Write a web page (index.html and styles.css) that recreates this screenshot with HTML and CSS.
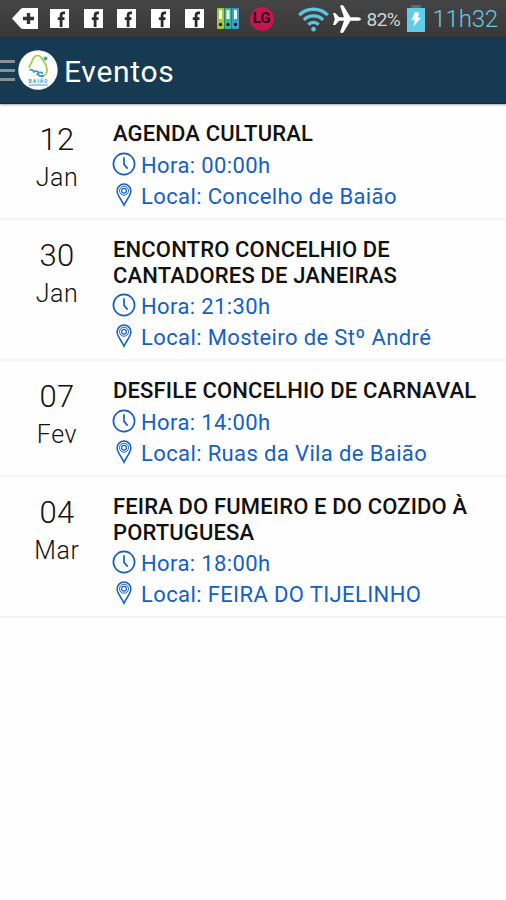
FILE: index.html
```html
<!DOCTYPE html>
<html lang="pt">

<head>
    <meta charset="UTF-8">
    <meta name="viewport" content="width=device-width, initial-scale=1.0">
    <title>Eventos</title>
    <link rel="stylesheet" href="styles.css">
</head>

<body>
    <!-- shared icons -->
    <svg class="sprite" width="0" height="0">
        <symbol id="icon-facebook" viewBox="0 0 19 19">
            <rect width="19" height="19" fill="#fff"/>
            <path d="M15 3.800h-1.500c-1.700 0-2.400.8-2.400 2.400V18M7.800 9.600h6.700" fill="none" stroke="#2b2b2b" stroke-width="2.800"/>
        </symbol>
        <symbol id="icon-clock" viewBox="0 0 24 24">
            <circle cx="12" cy="12" r="10.600" fill="none" stroke="currentColor" stroke-width="1.700"/>
            <path d="M12 5.200v7.200l3.600 4.200" fill="none" stroke="currentColor" stroke-width="1.700"/>
        </symbol>
        <symbol id="icon-pin" viewBox="0 0 24 24">
            <path d="M12 22.300C10 17.300 5.100 12.400 5.100 8a6.900 6.900 0 0 1 13.800 0c0 4.400-4.900 9.300-6.900 14.300z" fill="none" stroke="currentColor" stroke-width="1.500"/>
            <circle cx="12" cy="7.700" r="4.500" fill="none" stroke="currentColor" stroke-width="1"/>
            <circle cx="12" cy="7.700" r="2.400" fill="none" stroke="currentColor" stroke-width="1.200"/>
        </symbol>
    </svg>

    <div class="status-bar">
        <div class="notifications">
            <svg class="tag" width="27" height="21" viewBox="0 0 27 21">
                <path d="M0 10.500L8.500 1.200Q9.600 0 11.200 0H26v21H11.200Q9.600 21 8.500 19.800z" fill="#fff"/>
                <path d="M16.500 5v11M11 10.500h11" stroke="#333" stroke-width="3.400"/>
            </svg>
            <svg width="19" height="19"><use href="#icon-facebook"/></svg>
            <svg width="19" height="19"><use href="#icon-facebook"/></svg>
            <svg width="19" height="19"><use href="#icon-facebook"/></svg>
            <svg width="19" height="19"><use href="#icon-facebook"/></svg>
            <svg width="19" height="19"><use href="#icon-facebook"/></svg>
            <svg width="22" height="21" viewBox="0 0 22 21">
                <rect width="7" height="21" rx="1" fill="#a5c938"/>
                <rect x="7.500" width="7" height="21" rx="1" fill="#36b89a"/>
                <rect x="15" width="7" height="21" rx="1" fill="#3d9bd2"/>
                <path d="M2 2h3v9H2zM9.500 2h3v9h-3zM17 2h3v9h-3z" fill="#f2fbf0"/>
                <g fill="#222">
                    <circle cx="3.500" cy="16.500" r="1.700"/>
                    <circle cx="11" cy="16.500" r="1.700"/>
                    <circle cx="18.500" cy="16.500" r="1.700"/>
                </g>
            </svg>
            <span class="lg">LG</span>
        </div>
        <svg class="wifi" width="31" height="26" viewBox="0 0 30 25">
            <g fill="none" stroke="#5cc6e2" stroke-width="3.200">
                <path d="M1.200 8.800a19.500 19.500 0 0 1 27.600 0"/>
                <path d="M5.700 13.400a13.200 13.200 0 0 1 18.600 0"/>
                <path d="M10 17.900a7 7 0 0 1 10 0"/>
            </g>
            <circle cx="15" cy="22.300" r="2.200" fill="#5cc6e2"/>
        </svg>
        <svg class="plane" width="28" height="28" viewBox="0 0 28 28">
            <path d="M0 8h2.200l4 4.200h4.800L7.300 1.500Q7.100 0 8.600 0q1.500 0 2.200 1.300l6.700 10.900h8Q28 12.600 28 14t-2.500 1.800h-8l-6.700 10.900Q10.100 28 8.600 28q-1.500 0-1.300-1.500L11 15.800H6.200L2.200 20H0l1.800-6z" fill="#fff"/>
        </svg>
        <span class="percent">82%</span>
        <svg class="battery" width="18" height="27" viewBox="0 0 18 27">
            <path d="M4 0h10v4H4z" fill="#666"/>
            <rect y="3" width="18" height="24" fill="#5fcde9"/>
            <path d="M7.500 7.500h5l-1.800 5.300H14L6.200 22l1.900-6.800H4.500z" fill="#fff"/>
        </svg>
        <span class="time">11h32</span>
    </div>

    <div class="header">
        <div class="menu">
            <span></span>
            <span></span>
            <span></span>
        </div>
        <svg class="logo" width="40" height="40" viewBox="0 0 40 40">
            <circle cx="20" cy="20" r="19.700" fill="#fff"/>
            <path d="M11 18C11.500 15 13.500 13.500 14.500 10c1-3 3-4.500 5.500-4.500 3 0 3.500 2.500 5.500 5.500s4 7 3.500 10.500c-.3 2-1.500 3.500-3.500 4" fill="none" stroke="#a9cc3a" stroke-width="1.700"/>
            <path d="M11.500 20c2-.8 3.500-.3 4.500 1.800 2-1.300 3.500-.8 4.500 1 1.500-.8 3-.6 4.500.7M18.500 23.500l3.500 2.500h4" fill="none" stroke="#2f9bd8" stroke-width="1.800"/>
            <circle cx="27.500" cy="8.500" r="2" fill="#3a9fe0"/>
            <text x="20.500" y="32.800" class="logo-name">BAIÃO</text>
            <path d="M11 35h19" stroke="#5fb3df" stroke-width="1.200"/>
        </svg>
        <h1>Eventos</h1>
    </div>

    <div class="events">
        <div class="event">
            <div class="date">
                <div class="day">12</div>
                <div class="month">Jan</div>
            </div>
            <div class="info">
                <h2>AGENDA CULTURAL</h2>
                <p><svg width="24" height="24"><use href="#icon-clock"/></svg><span>Hora: 00:00h</span></p>
                <p><svg width="24" height="24"><use href="#icon-pin"/></svg><span>Local: Concelho de Baião</span></p>
            </div>
        </div>
        <div class="event">
            <div class="date">
                <div class="day">30</div>
                <div class="month">Jan</div>
            </div>
            <div class="info">
                <h2>ENCONTRO CONCELHIO DE<br>CANTADORES DE JANEIRAS</h2>
                <p><svg width="24" height="24"><use href="#icon-clock"/></svg><span>Hora: 21:30h</span></p>
                <p><svg width="24" height="24"><use href="#icon-pin"/></svg><span>Local: Mosteiro de Stº André</span></p>
            </div>
        </div>
        <div class="event">
            <div class="date">
                <div class="day">07</div>
                <div class="month">Fev</div>
            </div>
            <div class="info">
                <h2>DESFILE CONCELHIO DE CARNAVAL</h2>
                <p><svg width="24" height="24"><use href="#icon-clock"/></svg><span>Hora: 14:00h</span></p>
                <p><svg width="24" height="24"><use href="#icon-pin"/></svg><span>Local: Ruas da Vila de Baião</span></p>
            </div>
        </div>
        <div class="event">
            <div class="date">
                <div class="day">04</div>
                <div class="month">Mar</div>
            </div>
            <div class="info">
                <h2>FEIRA DO FUMEIRO E DO COZIDO À<br>PORTUGUESA</h2>
                <p><svg width="24" height="24"><use href="#icon-clock"/></svg><span>Hora: 18:00h</span></p>
                <p><svg width="24" height="24"><use href="#icon-pin"/></svg><span>Local: FEIRA DO TIJELINHO</span></p>
            </div>
        </div>
    </div>
</body>

</html>
```

FILE: styles.css
```css
* {
    margin: 0;
    padding: 0;
    box-sizing: border-box;
}

body {
    font-family: Roboto, sans-serif;
    background: #fefefe;
    color: #111;
    min-height: 100vh;
    overflow-x: hidden;
}

svg {
    display: block;
    flex-shrink: 0;
}

.sprite {
    display: none;
}

.status-bar {
    display: flex;
    align-items: center;
    height: 37px;
    padding-left: 9px;
    background: linear-gradient(#454545, #383838);
    white-space: nowrap;
}

.notifications {
    display: grid;
    grid-template-columns: repeat(8, 33.7px);
    justify-items: center;
    align-items: center;
}

.lg {
    width: 24px;
    height: 24px;
    border-radius: 50%;
    background: #c4164f;
    color: #2a0a16;
    font-size: 15px;
    font-weight: 700;
    line-height: 22px;
    text-align: center;
}

.wifi {
    margin-left: 19px;
}

.plane {
    margin-left: 4px;
}

.percent {
    width: 35px;
    margin-left: 6px;
    padding-top: 2px;
    font-size: 19px;
    letter-spacing: -0.5px;
    color: #d4d4d4;
}

.battery {
    margin-left: 5px;
}

.time {
    margin-left: 8px;
    font-size: 24px;
    font-weight: 300;
    letter-spacing: -0.2px;
    color: #6cc9e2;
}

.header {
    display: flex;
    align-items: center;
    height: 67px;
    background: #163a52;
    border-bottom: 1px solid #0f2c40;
    box-shadow: 0 1px 2px rgba(0, 0, 0, 0.35);
}

.menu {
    display: flex;
    flex-direction: column;
    gap: 6px;
    width: 15px;
}

.menu span {
    height: 3px;
    background: #8b8f92;
}

.logo {
    margin-left: 3px;
}

.logo-name {
    font-size: 5px;
    font-weight: 700;
    letter-spacing: 1px;
    text-anchor: middle;
    fill: #3aa0dc;
}

h1 {
    margin-left: 6px;
    padding-top: 2px;
    color: #fff;
    font-size: 30px;
    font-weight: 400;
    letter-spacing: 0.7px;
}

.event {
    display: flex;
    padding: 17px 0 7.500px;
    border-bottom: 2px solid #f5f5f5;
}

.date {
    width: 114px;
    margin-right: -1px;
    text-align: center;
}

.day {
    font-size: 31px;
    font-weight: 300;
    line-height: 38px;
    letter-spacing: 0.2px;
}

.month {
    font-size: 25px;
    font-weight: 300;
    line-height: 38px;
    letter-spacing: 0.6px;
}

h2 {
    margin-bottom: 1px;
    font-size: 22px;
    font-weight: 500;
    line-height: 26px;
    letter-spacing: 0.15px;
    white-space: nowrap;
}

.info p {
    display: flex;
    align-items: center;
    gap: 5px;
    height: 31px;
    margin-left: -1px;
    color: #1460c8;
    font-size: 22px;
    letter-spacing: 0.38px;
    white-space: nowrap;
}

.info span {
    padding-top: 3px;
}
```
